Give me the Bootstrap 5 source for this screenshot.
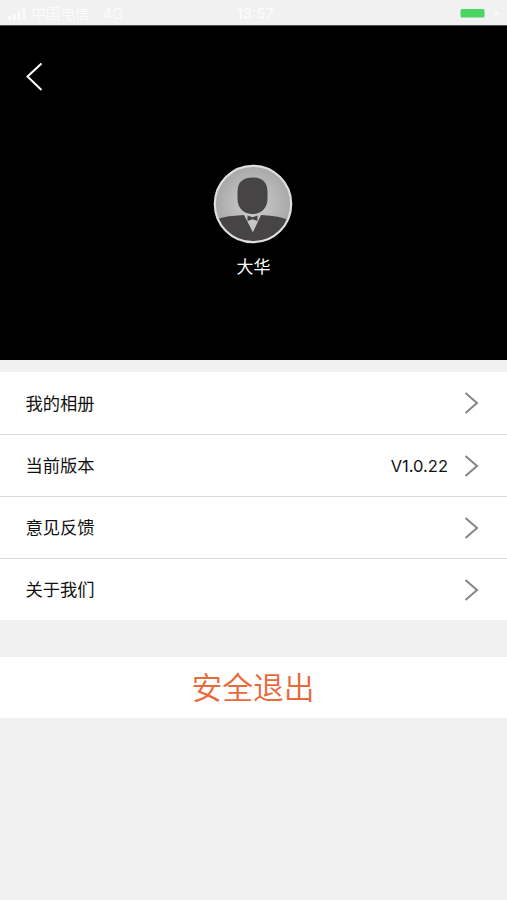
<!DOCTYPE html>
<html lang="zh-CN">
<head>
<meta charset="utf-8">
<meta name="viewport" content="width=device-width, initial-scale=1">
<title>个人中心</title>
<link href="https://cdn.jsdelivr.net/npm/bootstrap@5.3.0/dist/css/bootstrap.min.css" rel="stylesheet">
<style>
  body { background: #f1f1f1; color: #111; font-family: Inter, "Noto Sans CJK SC", sans-serif; font-size: 17.3px; line-height: 24px; }
  svg { display: block; flex: none; }
  .status { height: 25px; padding: 2px 0 0 8px; background: #f1f1f1; color: #fbfbfb; font-size: 14.7px; line-height: 22px; }
  .status .carrier { margin-left: 4px; }
  .status .network { margin-left: 13px; }
  .status .clock { font-weight: 500; }
  .status .power { padding: 0 5px 2px 0; }
  .profile { height: 335px; background: #000; border-top: 1px solid #505050; }
  .back { padding: 36px 0 0 24px; }
  .avatar { margin-top: 72px; }
  .avatar svg { margin-right: 1px; }
  .nickname { margin-top: 11px; font-size: 17px; }
  .menu { margin-top: 12px; }
  .menu .list-group-item { height: 62px; padding: 1px 28px 0 25.5px; border-color: #dcdcdc; color: #111; }
  .menu .list-group-item:first-child { height: 62.600px; }
  .menu .list-group-item:last-child { border-bottom: 0; height: 61.400px; }
  .menu .me-auto { padding-top: 1px; }
  .version { margin-right: 16px; font-size: 16.500px; }
  .logout { height: 61px; margin-top: 37px; padding: 1px 1px 0 0; color: #e9683c; font-size: 30.800px; font-weight: 350; line-height: 60px; }
</style>
</head>
<body>
<header class="status d-flex align-items-center">
  <div class="col d-flex align-items-center">
    <svg width="19" height="12" viewBox="0 0 19 12" fill="#fbfbfb"><rect y="8" width="3" height="4" rx="1"/><rect x="4.8" y="6" width="3" height="6" rx="1"/><rect x="9.6" y="3" width="3" height="9" rx="1"/><rect x="14.4" width="3" height="12" rx="1"/></svg>
    <span class="carrier">中国电信</span><span class="network">4G</span>
  </div>
  <div class="clock">13:57</div>
  <div class="power col d-flex justify-content-end align-items-center">
    <svg width="44" height="12" viewBox="0 0 44 12"><rect x="2.500" y="2" width="24" height="8.500" rx="1.5" fill="#4cd562"/><path d="M35 7.500 38.500 4l2.500 3.500z" fill="#fbfbfb"/></svg>
  </div>
</header>
<section class="profile text-white">
  <div class="back">
    <svg width="20" height="30" viewBox="0 0 20 30" fill="none" stroke="#fff" stroke-width="2"><path d="M17.5 1.5 3.5 14.5l14 13.5"/></svg>
  </div>
  <div class="avatar d-flex flex-column align-items-center">
    <svg width="80" height="80" viewBox="0 0 80 80">
      <defs>
        <radialGradient id="backdrop"><stop offset=".35" stop-color="#c2c2c2"/><stop offset="1" stop-color="#a8a8a8"/></radialGradient>
        <clipPath id="disc"><circle cx="40" cy="40" r="38"/></clipPath>
      </defs>
      <circle cx="40" cy="40" r="38" fill="url(#backdrop)"/>
      <g clip-path="url(#disc)">
        <path d="M5 55Q11 52 31 51L40 68 48 51Q68 52 75 56V80H5z" fill="#464445"/>
        <path d="M31 50h17l-8.200 18z" fill="#c6c6c6"/>
        <path d="M24.500 28C24.500 17 31 13.500 39.500 13.500S54.500 17 54.500 28V35C54.500 44 48 50 39.500 50S24.500 44 24.500 35z" fill="#464445"/>
        <path d="m34.500 51.500 5 1.700 5-1.700v5.500l-5-1.700-5 1.700z" fill="#464445"/>
      </g>
      <circle cx="40" cy="40" r="38.200" fill="none" stroke="#dedede" stroke-width="2.200"/>
    </svg>
    <div class="nickname">大华</div>
  </div>
</section>
<main>
  <div class="menu list-group list-group-flush">
    <a class="list-group-item d-flex align-items-center"><span class="me-auto">我的相册</span>
      <svg width="15" height="24" viewBox="0 0 15 24" fill="none" stroke="#858585" stroke-width="2"><path d="m1.500 2 11.500 10-11.500 10"/></svg></a>
    <a class="list-group-item d-flex align-items-center"><span class="me-auto">当前版本</span><span class="version">V1.0.22</span>
      <svg width="15" height="24" viewBox="0 0 15 24" fill="none" stroke="#858585" stroke-width="2"><path d="m1.500 2 11.500 10-11.500 10"/></svg></a>
    <a class="list-group-item d-flex align-items-center"><span class="me-auto">意见反馈</span>
      <svg width="15" height="24" viewBox="0 0 15 24" fill="none" stroke="#858585" stroke-width="2"><path d="m1.500 2 11.500 10-11.500 10"/></svg></a>
    <a class="list-group-item d-flex align-items-center"><span class="me-auto">关于我们</span>
      <svg width="15" height="24" viewBox="0 0 15 24" fill="none" stroke="#858585" stroke-width="2"><path d="m1.500 2 11.500 10-11.500 10"/></svg></a>
  </div>
  <button class="logout btn rounded-0 border-0 bg-white w-100 d-block">安全退出</button>
</main>
<script src="https://cdn.jsdelivr.net/npm/bootstrap@5.3.0/dist/js/bootstrap.bundle.min.js"></script>
</body>
</html>
